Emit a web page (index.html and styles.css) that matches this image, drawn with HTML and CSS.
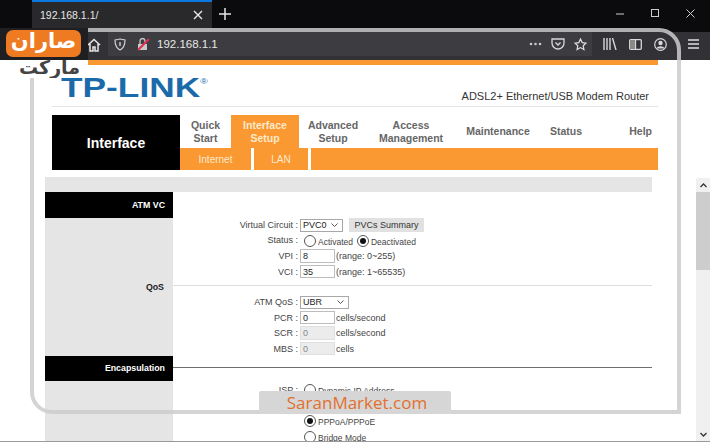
FILE: index.html
```html
<!DOCTYPE html>
<html lang="en">
<head>
<meta charset="utf-8">
<title>TP-LINK Interface</title>
<link rel="stylesheet" href="styles.css">
</head>
<body>
<div class="tabbar">
  <div class="tab"><span class="tab-title">192.168.1.1/</span><svg class="ic" width="10" height="10" viewBox="0 0 10 10"><path d="M1 1l8 8M9 1l-8 8" stroke="#e8e8e8" stroke-width="1.4"/></svg></div>
  <svg class="plus" width="12" height="12" viewBox="0 0 12 12"><path d="M6 0v12M0 6h12" stroke="#e8e8e8" stroke-width="1.5"/></svg>
  <div class="winctl">
    <svg width="8" height="10" viewBox="0 0 8 10"><path d="M0 5h8" stroke="#ccc"/></svg>
    <svg width="8" height="9" viewBox="0 0 8 9"><rect x=".5" y=".5" width="7" height="7" fill="none" stroke="#ccc"/></svg>
    <svg width="9" height="9" viewBox="0 0 9 9"><path d="M.5.5l8 8M8.500.5l-8 8" stroke="#ccc"/></svg>
  </div>
</div>
<div class="toolbar">
  <svg class="home" width="14" height="14" viewBox="0 0 14 14"><path d="M1 7l6-5.500L13 7M3 6v7h3V9h2v4h3V6" fill="none" stroke="#e8e8e8" stroke-width="1.500"/></svg>
  <div class="urlbar">
    <svg class="shield" width="12" height="13" viewBox="0 0 12 13"><path d="M1 2l5-1 5 1c0 5-1 8-5 10C2 10 1 7 1 2z" fill="none" stroke="#d0d0d0" stroke-width="1.200"/><path d="M6 4v4" stroke="#d0d0d0" stroke-width="1.400"/></svg>
    <svg class="lock" width="13" height="13" viewBox="0 0 13 13"><path d="M1 6h9v6H1z" fill="#c9c9c9"/><path d="M3 6V3a2.500 2.500 0 0 1 5 0v3" fill="none" stroke="#c9c9c9" stroke-width="1.300"/><path d="M1 12L12 1" stroke="#d9304f" stroke-width="2"/></svg>
    <span class="url">192.168.1.1</span>
    <span class="url-right">
      <svg width="13" height="4" viewBox="0 0 13 4"><g fill="#c8c8c8"><circle cx="2" cy="2" r="1.300"/><circle cx="6.500" cy="2" r="1.300"/><circle cx="11" cy="2" r="1.300"/></g></svg>
      <svg width="14" height="12" viewBox="0 0 14 12"><path d="M1 1h12v4a6 6 0 0 1-12 0z" fill="none" stroke="#d8d8d8" stroke-width="1.300"/><path d="M4.500 4.500l2.500 2.500 2.500-2.500" fill="none" stroke="#d8d8d8" stroke-width="1.300"/></svg>
      <svg width="13" height="13" viewBox="0 0 13 13"><path d="M6.500 1l1.700 3.600 3.800.5-2.800 2.600.7 3.800-3.400-1.900-3.400 1.900.7-3.800L1 5.100l3.800-.5z" fill="none" stroke="#e0e0e0" stroke-width="1.200"/></svg>
    </span>
  </div>
  <div class="tools">
    <svg width="14" height="12" viewBox="0 0 14 12"><path d="M1 0v12M4 0v12M7 0v12M9.500 0l3.500 12" stroke="#d8d8d8" stroke-width="1.400" fill="none"/></svg>
    <svg width="13" height="11" viewBox="0 0 13 11"><rect x=".7" y=".7" width="11.600" height="9.600" rx="1" fill="none" stroke="#d8d8d8" stroke-width="1.300"/><path d="M6.500 1v9" stroke="#d8d8d8" stroke-width="1.300"/><rect x="1" y="1" width="5" height="9" fill="#8a8a8a"/></svg>
    <svg width="13" height="13" viewBox="0 0 13 13"><circle cx="6.500" cy="6.500" r="5.800" fill="none" stroke="#d8d8d8" stroke-width="1.200"/><circle cx="6.500" cy="5" r="2.200" fill="#d8d8d8"/><path d="M2.500 10.500c1-3 7-3 8 0z" fill="#d8d8d8"/></svg>
    <svg class="menu" width="11" height="10" viewBox="0 0 11 10"><path d="M0 1h11M0 5h11M0 9h11" stroke="#e0e0e0" stroke-width="1.400"/></svg>
  </div>
</div>
<div class="page">
  <div class="main">
    <div class="topstripe"></div>
    <div class="brand">
      <div class="logo">TP-LINK<sup class="reg">®</sup></div>
      <div class="model">ADSL2+ Ethernet/USB Modem Router</div>
    </div>
    <div class="nav">
      <div class="nav-title">Interface</div>
      <div class="nav-body">
        <div class="nav-tabs">
          <div class="t t-quick">Quick<br>Start</div>
          <div class="t t-iface">Interface<br>Setup</div>
          <div class="t t-adv">Advanced<br>Setup</div>
          <div class="t t-acc">Access<br>Management</div>
          <div class="t t-mnt">Maintenance</div>
          <div class="t t-sts">Status</div>
          <div class="t t-hlp">Help</div>
        </div>
        <div class="nav-sub">
          <div class="s s-net">Internet</div>
          <div class="s s-lan">LAN</div>
          <div class="s s-rest"></div>
        </div>
      </div>
    </div>
    <div class="band"></div>
    <div class="content">
      <div class="side">
        <div class="side-head">ATM VC</div>
        <div class="side-qos">QoS</div>
        <div class="side-head">Encapsulation</div>
      </div>
      <div class="form">
        <div class="block b1">
          <div class="row r16"><span class="lab">Virtual Circuit :</span><span class="sel w43">PVC0<svg width="7" height="4" viewBox="0 0 7 4"><path d="M.5.5l3 3 3-3" fill="none" stroke="#555"/></svg></span><button class="btn">PVCs Summary</button></div>
          <div class="row"><span class="lab lab-status">Status :</span><span class="radio"></span><span class="opt">Activated</span><span class="radio on"></span><span class="opt">Deactivated</span></div>
          <div class="row r16"><span class="lab">VPI :</span><span class="inp">8</span><span class="note">(range: 0~255)</span></div>
          <div class="row"><span class="lab">VCI :</span><span class="inp">35</span><span class="note">(range: 1~65535)</span></div>
        </div>
        <div class="block b2">
          <div class="row r16"><span class="lab">ATM QoS :</span><span class="sel w49">UBR<svg width="7" height="4" viewBox="0 0 7 4"><path d="M.5.5l3 3 3-3" fill="none" stroke="#555"/></svg></span></div>
          <div class="row"><span class="lab">PCR :</span><span class="inp">0</span><span class="note">cells/second</span></div>
          <div class="row r16"><span class="lab">SCR :</span><span class="inp off">0</span><span class="note">cells/second</span></div>
          <div class="row"><span class="lab">MBS :</span><span class="inp off">0</span><span class="note">cells</span></div>
        </div>
        <div class="block b3">
          <div class="row r16"><span class="lab">ISP :</span><span class="radio"></span><span class="opt">Dynamic IP Address</span></div>
          <div class="row r-hidden"><span class="lab"></span></div>
          <div class="row r16"><span class="lab"></span><span class="radio on"></span><span class="opt">PPPoA/PPPoE</span></div>
          <div class="row"><span class="lab"></span><span class="radio"></span><span class="opt">Bridge Mode</span></div>
        </div>
      </div>
    </div>
  </div>
  <div class="scroll">
    <div class="sb-top"></div>
    <div class="sb-track">
      <svg class="arr" width="7" height="5" viewBox="0 0 7 5"><path d="M.5 4l3-3 3 3" fill="none" stroke="#333" stroke-width="1.300"/></svg>
      <div class="thumb"></div>
      <svg class="arr arr-d" width="7" height="5" viewBox="0 0 7 5"><path d="M.5 1l3 3 3-3" fill="none" stroke="#333" stroke-width="1.300"/></svg>
    </div>
  </div>
</div>
<div class="frame"></div>
<div class="wm-logo">
  <div class="wm-orange" dir="rtl" lang="fa">صاران</div>
  <div class="wm-dark" dir="rtl" lang="fa">مارکت</div>
</div>
<div class="wm-banner">SaranMarket.com</div>
</body>
</html>
```
FILE: styles.css
```css
* { box-sizing: border-box; }
html, body { margin: 0; padding: 0; }
body { width: 710px; height: 442px; overflow: hidden; position: relative; background: #fff; font-family: "Liberation Sans", Arial, sans-serif; }

.tabbar { height: 32px; background: #0b0b0e; display: flex; align-items: flex-start; padding-left: 32px; }
.tab { width: 180px; height: 28px; background: #29292c; border-top: 2px solid #0a78e0; display: flex; align-items: center; justify-content: space-between; padding: 0 9px 0 8px; color: #e6e6e6; font-size: 10.5px; }
.plus { margin: 8px 0 0 7px; }
.winctl { margin-left: auto; display: flex; gap: 27px; padding: 9px 15px 0 0; }

.toolbar { height: 28px; background: #323236; display: flex; align-items: flex-start; padding-left: 88px; }
.home { margin: 6px 0 0 -1px; }
.urlbar { width: 484px; height: 24px; margin-left: 7px; background: #3d3d41; display: flex; align-items: center; padding-left: 6px; color: #e8e8e8; font-size: 11.5px; }
.shield { margin-right: 11px; }
.lock { margin-right: 7px; }
.url-right { margin-left: auto; display: flex; align-items: center; gap: 9px; padding-right: 5px; }
.tools { display: flex; gap: 12px; align-items: center; height: 24px; padding-left: 11px; }
.menu { margin-left: 9px; }

.page { height: 382px; display: flex; overflow: hidden; border-bottom: 1px solid #9a9a9a; }
.main { width: 696px; flex: none; }
.topstripe { height: 5px; width: 650px; margin-left: 8px; background: #fa9832; }
.brand { margin-left: 52px; width: 606px; height: 42px; border-bottom: 1px solid #e4e4e4; position: relative; display: flex; }
.logo { color: #1b6aa9; font-weight: 700; font-size: 28px; line-height: 22px; height: 22px; margin: 12px 0 0 9px; transform: scaleX(1.26); transform-origin: left center; white-space: nowrap; }
.reg { font-size: 8px; line-height: 0; vertical-align: 13px; font-weight: 400; }
.model { position: absolute; right: 9px; top: 24px; font-size: 11px; color: #333; line-height: 14px; }

.nav { margin: 8px 0 0 52px; width: 606px; height: 55px; display: flex; }
.nav-title { width: 128px; background: #000; color: #fff; font-weight: 700; font-size: 14px; display: flex; align-items: center; justify-content: center; }
.nav-body { flex: 1; display: flex; flex-direction: column; }
.nav-tabs { height: 33px; display: flex; }
.t { color: #666; font-weight: 700; font-size: 10.5px; line-height: 13px; text-align: center; display: flex; align-items: center; justify-content: center; }
.t-quick { width: 51px; }
.t-iface { width: 68px; background: #fa9832; color: #fdeacb; }
.t-adv { width: 68px; }
.t-acc { width: 88px; }
.t-mnt { width: 86px; }
.t-sts { width: 50px; }
.t-hlp { width: 67px; justify-content: flex-end; padding-right: 6px; }
.nav-sub { height: 22px; display: flex; gap: 3px; }
.s { background: #fa9832; color: #fdeacb; font-size: 10px; display: flex; align-items: center; justify-content: center; }
.s-net { width: 71px; }
.s-lan { width: 54px; }
.s-rest { flex: 1; }

.band { margin: 7px 0 0 45px; width: 607px; height: 15px; background: #e5e5e5; }
.content { margin-left: 45px; width: 607px; display: flex; height: 250px; }
.side { width: 128px; background: #e5e5e5; flex: none; display: flex; flex-direction: column; font-size: 8.800px; font-weight: 700; }
.side-head { height: 25.500px; background: #000; color: #fff; display: flex; align-items: center; justify-content: flex-end; padding-right: 8px; }
.side-qos { height: 138px; display: flex; align-items: flex-end; justify-content: flex-end; padding: 0 9px 63px 0; color: #222; line-height: 12px; }
.form { flex: 1; color: #444; font-size: 9px; }
.block { border-bottom: 1px solid #dedede; }
.b1 { padding-top: 25px; height: 94px; }
.b2 { padding-top: 8px; height: 82px; border-bottom: 1px solid #6e6e6e; }
.b3 { padding-top: 14px; border-bottom: 0; }
.row { height: 15px; display: flex; align-items: center; white-space: nowrap; }
.r16 { height: 16px; }
.r-hidden { height: 15px; }
.lab { width: 125px; text-align: right; flex: none; margin-right: 2px; }
.lab-status { position: relative; top: -1px; }
.sel { height: 13px; border: 1px solid #a8a8a8; background: #fff; display: flex; align-items: center; justify-content: space-between; padding: 0 4px 0 2px; color: #222; }
.w43 { width: 43px; }
.w49 { width: 49px; }
.btn { margin-left: 6px; width: 75px; height: 14px; padding: 0; border: 0; background: #e1e1e1; font: inherit; color: #333; }
.inp { width: 35px; height: 13.500px; border: 1px solid #bdbdbd; padding-left: 2px; line-height: 12px; color: #222; background: #fff; margin-right: 1px; }
.off { background: #ececec; border-color: #e0e0e0; color: #888; }
.radio { width: 12px; height: 12px; border: 1px solid #555; border-radius: 50%; margin: 0 2px 0 4px; background: #fff; flex: none; display: inline-flex; align-items: center; justify-content: center; }
.on::after { content: ""; width: 6px; height: 6px; border-radius: 50%; background: #111; }
.opt { position: relative; top: 1px; font-size: 8.500px; }
.scroll { flex: 1; display: flex; flex-direction: column; }
.sb-top { height: 118px; }
.sb-track { flex: 1; background: #f0f0f0; display: flex; flex-direction: column; align-items: center; position: relative; padding-top: 5px; }
.thumb { margin-top: 4px; width: 100%; height: 78px; background: #cdcdcd; }
.arr-d { position: absolute; bottom: 4px; left: 3.500px; }

/* watermark drawn over the screenshot */
.frame { position: absolute; left: 30px; top: 28px; width: 651px; height: 386px; border: 4px solid rgba(205,205,205,.85); border-radius: 22px 22px 0 22px; pointer-events: none; }
.wm-logo { position: absolute; left: 0; top: 28px; width: 88px; height: 50px; background: linear-gradient(#1f1f22 0 32px, #fff 32px); }
.wm-orange { position: absolute; left: 6px; top: 2px; width: 75px; height: 27px; background: #ee7a22; border-radius: 7px; color: #fff; font: 700 21px/23px "DejaVu Sans", sans-serif; text-align: center; overflow: hidden; }
.wm-dark { position: absolute; left: 0; top: 28px; width: 88px; height: 22px; padding-right: 8px; color: #444; font: 700 19px/22px "DejaVu Sans", sans-serif; text-align: right; overflow: hidden; }
.wm-banner { position: absolute; left: 259px; top: 391px; width: 192px; height: 23px; padding-left: 4px; background: #d6d6d6; border-radius: 2px 2px 0 0; color: #e2702e; font: 400 17px/23px "Open Sans", sans-serif; text-align: center; }
```
